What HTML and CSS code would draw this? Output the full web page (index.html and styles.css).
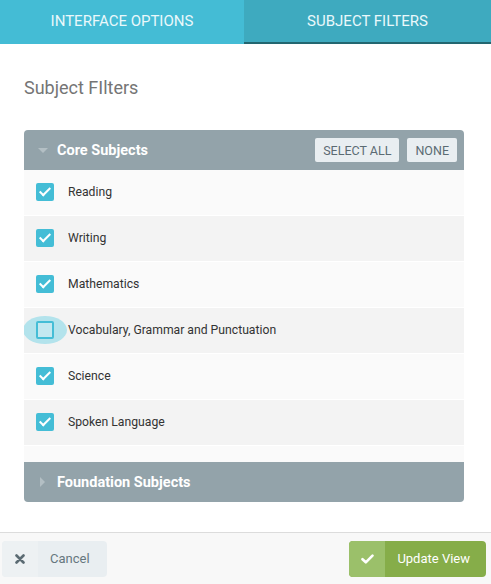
FILE: index.html
```html
<!DOCTYPE html>
<html lang="en">
<head>
    <meta charset="UTF-8">
    <meta name="viewport" content="width=device-width, initial-scale=1.0">
    <title>Subject Filters</title>
    <link rel="stylesheet" href="styles.css">
</head>
<body>

<div class="tabs">
    <div class="tab">Interface Options</div>
    <div class="tab active">Subject Filters</div>
</div>

<div class="content">
    <h2 class="title">Subject FIlters</h2>

    <div class="panel">
        <div class="panel-head">
            <span class="caret down"></span>
            <span class="panel-title">Core Subjects</span>
            <button class="small-btn">SELECT ALL</button>
            <button class="small-btn">NONE</button>
        </div>
        <div class="rows">
            <label class="row"><span class="box checked"></span>Reading</label>
            <label class="row"><span class="box checked"></span>Writing</label>
            <label class="row"><span class="box checked"></span>Mathematics</label>
            <label class="row"><span class="box focus"></span>Vocabulary, Grammar and Punctuation</label>
            <label class="row"><span class="box checked"></span>Science</label>
            <label class="row"><span class="box checked"></span>Spoken Language</label>
        </div>
        <div class="spacer"></div>
        <div class="panel-head closed">
            <span class="caret right"></span>
            <span class="panel-title">Foundation Subjects</span>
        </div>
    </div>
</div>

<div class="footer">
    <button class="btn cancel">
        <span class="btn-icon">
            <svg width="10" height="10" viewBox="0 0 10 10"><path d="M1.5 1.5 L8.5 8.5 M8.5 1.5 L1.5 8.5" stroke="#5b6b73" stroke-width="2.6" stroke-linecap="round"/></svg>
        </span>
        <span class="btn-text">Cancel</span>
    </button>
    <button class="btn update">
        <span class="btn-icon">
            <svg width="13" height="10" viewBox="0 0 13 10"><path d="M1.5 5.2 L4.8 8.3 L11.5 1.6" fill="none" stroke="#fff" stroke-width="2.6" stroke-linecap="round" stroke-linejoin="round"/></svg>
        </span>
        <span class="btn-text">Update View</span>
    </button>
</div>

</body>
</html>
```

FILE: styles.css
```css
/* Subject filter panel */

body {
    font-family: Roboto, "Liberation Sans", sans-serif;
    margin: 0;
    padding: 0;
    background-color: #fff;
    width: 491px;
    height: 584px;
    display: flex;
    flex-direction: column;
}
.tabs {
    display: flex;
    height: 44px;
}
.tab {
    flex: 0 0 244px;
    background-color: #44bcd5;
    color: #eaf8fb;
    text-transform: uppercase;
    font-size: 15px;
    display: flex;
    align-items: center;
    justify-content: center;
    padding-bottom: 3px;
    box-sizing: border-box;
}
.tab.active {
    flex: 1;
    background-color: #3eaabf;
    border-bottom: 2px solid #236670;
    padding-bottom: 1px;
}
.content {
    flex: 1;
    padding: 0 27px 0 24px;
}
.title {
    font-size: 18px;
    font-weight: normal;
    color: #757575;
    margin: 33px 0 31px 0;
    line-height: 22px;
}
.panel {
    border-radius: 4px;
    overflow: hidden;
}
.panel-head {
    background-color: #93a3aa;
    height: 40px;
    display: flex;
    align-items: center;
    padding: 0 7px 0 14px;
}
.caret {
    width: 0;
    height: 0;
    margin-right: 9px;
}
.caret.down {
    border-left: 5px solid transparent;
    border-right: 5px solid transparent;
    border-top: 5px solid #b3bfc4;
    margin-top: 1px;
}
.caret.right {
    border-top: 5px solid transparent;
    border-bottom: 5px solid transparent;
    border-left: 5px solid #b3bfc4;
    margin-left: 2px;
    margin-right: 12px;
}
.panel-title {
    color: #fff;
    font-weight: bold;
    font-size: 14.5px;
    flex: 1;
}
.small-btn {
    font-family: inherit;
    background-color: #e9eef1;
    color: #5b6b73;
    border: none;
    border-radius: 2px;
    font-size: 12.5px;
    height: 24px;
    padding: 0 8px;
    margin-left: 8px;
}
.rows {
    background-color: #fff;
}
.row {
    position: relative;
    z-index: 0;
    display: flex;
    align-items: center;
    height: 46px;
    padding-left: 12px;
    padding-bottom: 1px;
    box-sizing: border-box;
    font-size: 12.2px;
    color: #333;
    background-color: #fafafa;
    border-bottom: 1px solid #fff;
}
.row:nth-child(even) {
    background-color: #f3f3f3;
}
.box {
    width: 18px;
    height: 18px;
    border-radius: 2px;
    box-sizing: border-box;
    margin-right: 14px;
    position: relative;
}
.box.checked {
    background-color: #44bdd6;
}
.box.checked::after {
    content: "";
    position: absolute;
    left: 6px;
    top: 2px;
    width: 4px;
    height: 9px;
    border-right: 2px solid #fff;
    border-bottom: 2px solid #fff;
    transform: rotate(45deg);
}
.box.focus {
    border: 2px solid #44bdd6;
    background-color: #c3e8f0;
}
/* focus halo behind the unchecked box */
.box.focus::before {
    content: "";
    position: absolute;
    left: -15px;
    top: -7px;
    width: 44px;
    height: 28px;
    border-radius: 50%;
    background-color: #b3e3ec;
    z-index: -1;
}
.spacer {
    height: 16px;
    background-color: #fafafa;
}
.footer {
    height: 51px;
    border-top: 1px solid #dcdcdc;
    background-color: #f8f8f8;
    display: flex;
    justify-content: space-between;
    align-items: center;
    padding: 0 5px 0 2px;
}
.btn {
    font-family: inherit;
    display: flex;
    height: 36px;
    padding: 0;
    border: none;
    border-radius: 4px;
    overflow: hidden;
    font-size: 13px;
}
.btn-icon {
    width: 36px;
    display: flex;
    align-items: center;
    justify-content: center;
}
.btn-text {
    display: flex;
    align-items: center;
    padding: 0 17px 0 12px;
}
.cancel {
    background-color: #e9eef1;
    color: #66777f;
}
.cancel .btn-icon {
    background-color: #edf1f3;
}
.update {
    background-color: #86ad49;
    color: #fff;
}
.update .btn-icon {
    background-color: #9bc06a;
}
.update .btn-text {
    padding: 0 16px 0 12px;
}
```
